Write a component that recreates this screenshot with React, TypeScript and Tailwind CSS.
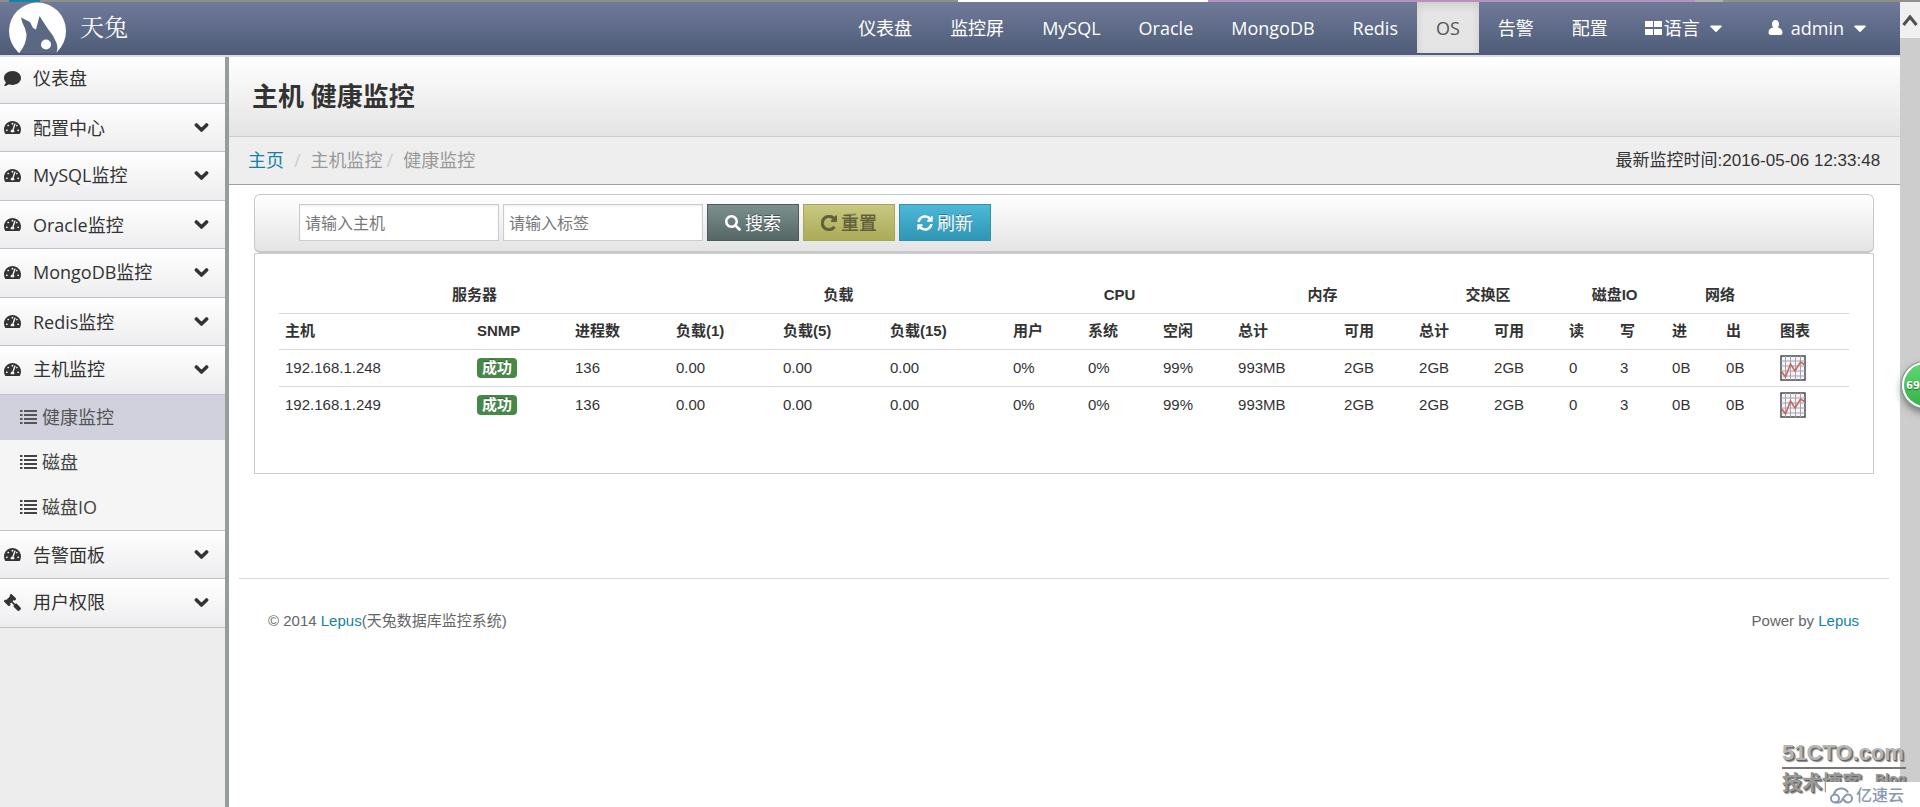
import React from "react";
import {
  FaCaretDown,
  FaChevronDown,
  FaComment,
  FaGavel,
  FaSearch,
  FaSyncAlt,
  FaTachometerAlt,
} from "react-icons/fa";

const NAV = ["仪表盘", "监控屏", "MySQL", "Oracle", "MongoDB", "Redis", "OS", "告警", "配置"];

type Entry = { label: string; icon: React.ReactNode; children?: string[] };

const gauge = <FaTachometerAlt size={17} />;

const MENU: Entry[] = [
  { label: "配置中心", icon: gauge },
  { label: "MySQL监控", icon: gauge },
  { label: "Oracle监控", icon: gauge },
  { label: "MongoDB监控", icon: gauge },
  { label: "Redis监控", icon: gauge },
  { label: "主机监控", icon: gauge, children: ["健康监控", "磁盘", "磁盘IO"] },
  { label: "告警面板", icon: gauge },
  { label: "用户权限", icon: <FaGavel size={17} className="-scale-x-100" /> },
];

const GROUPS: [string, number][] = [
  ["服务器", 3],
  ["负载", 3],
  ["CPU", 3],
  ["内存", 2],
  ["交换区", 2],
  ["磁盘IO", 2],
  ["网络", 2],
  ["", 1],
];

const COLUMNS = [
  "主机", "SNMP", "进程数", "负载(1)", "负载(5)", "负载(15)", "用户", "系统", "空闲",
  "总计", "可用", "总计", "可用", "读", "写", "进", "出", "图表",
];

const ROWS = ["192.168.1.248", "192.168.1.249"].map((host) => ({
  host,
  processes: "136",
  values: ["0.00", "0.00", "0.00", "0%", "0%", "99%", "993MB", "2GB", "2GB", "2GB", "0", "3", "0B", "0B"],
}));

function Logo() {
  return (
    <svg width="60" height="51" viewBox="8 2 60 51" aria-hidden="true">
      <circle cx="37.500" cy="31" r="28.500" fill="#fff" />
      <path
        d="M21 17.500 L30 22 L33 28 L36 29.500 L39.500 16 Q44 23 48 29 Q54 36 56.500 43 Q58.500 48 56 54 L18.500 54 Q27 44 26.500 34 Q25.500 28 22.500 23 Z"
        fill="#5a6884"
      />
      <circle cx="46" cy="44.500" r="5" fill="#fff" />
    </svg>
  );
}

function ListIcon() {
  return (
    <svg width="17" height="14" viewBox="0 0 17 14" aria-hidden="true" fill="currentColor">
      <path d="M0 0h2.500v2H0zM4 0h13v2H4zM0 4h2.500v2H0zM4 4h13v2H4zM0 8h2.500v2H0zM4 8h13v2H4zM0 12h2.500v2H0zM4 12h13v2H4z" />
    </svg>
  );
}

function RepeatIcon() {
  return (
    <svg width="16" height="16" viewBox="128 128 1536 1536" aria-hidden="true" fill="currentColor" stroke="currentColor" strokeWidth="50">
      <path d="M1664 256v448q0 26-19 45t-45 19h-448q-42 0-59-40-17-39 14-69l138-138Q1097 384 896 384q-104 0-198.500 40.500T534 534 424.500 697.500 384 896t40.500 198.500T534 1258t163.500 109.500T896 1408q119 0 225-52t179-147q7-10 23-12 15 0 25 9l137 138q9 8 9.500 20.500t-7.500 22.500q-109 132-264 204.500T896 1664q-156 0-298-61t-245-164-164-245-61-298 61-298 164-245 245-164 298-61q147 0 284.500 55.500T1425 328l130-129q29-31 70-14 39 17 39 59z" />
    </svg>
  );
}

function UserIcon() {
  return (
    <svg width="15" height="15" viewBox="0 0 15 15" aria-hidden="true" fill="currentColor">
      <path d="M7.500 0C9.800 0 11 1.700 11 4c0 1.500-.5 2.800-1.300 3.600C12.500 8 14.500 9.500 14.500 12.500c0 1.500-.8 2.500-2 2.500h-10c-1.200 0-2-1-2-2.500 0-3 2-4.500 4.800-4.900C4.500 6.800 4 5.500 4 4c0-2.300 1.200-4 3.500-4z" />
    </svg>
  );
}

function ChartIcon() {
  return (
    <svg width="26" height="26" viewBox="0 0 26 26" aria-hidden="true" className="block">
      <rect x="1" y="1" width="24" height="24" fill="#f6f4f6" stroke="#4a4a50" strokeWidth="1.500" />
      <path d="M5.500 1v24M10.500 1v24M15.500 1v24M20.500 1v24M1 6h24M1 11h24M1 16h24M1 21h24" stroke="#a4a4b0" strokeWidth="1" />
      <path d="M1.500 16.500L5.500 22 10.500 9 15 16 20.500 7 24.500 9.500" fill="none" stroke="#c2675c" strokeWidth="1.500" />
    </svg>
  );
}

function Header() {
  return (
    <header className="flex h-[55px] items-stretch justify-between border-b-2 border-[#dcdce8] bg-gradient-to-b from-[#6f7a98] to-[#4e5c78] text-white">
      <a href="#" className="flex items-start pl-2">
        <Logo />
        <span className="pt-1.5 pl-3 font-['Noto_Serif_CJK_SC','Noto_Sans_CJK_SC',serif] text-2xl leading-9">天兔</span>
      </a>
      <nav className="flex items-stretch pr-4 pb-0.5 text-lg">
        {NAV.map((item) => (
          <a
            key={item}
            href="#"
            className={
              item === "OS"
                ? "flex items-center bg-[#e5e5e5] px-[19px] text-[#555] shadow-[inset_0_3px_8px_rgba(0,0,0,0.12)]"
                : "flex items-center px-[19px]"
            }
          >
            {item}
          </a>
        ))}
        <button type="button" className="flex items-center pr-4 pl-[18px]">
          <svg width="17" height="14" viewBox="0 0 17 14" aria-hidden="true" fill="currentColor">
            <path d="M0 0h8v6H0zM9 0h8v6H9zM0 8h8v6H0zM9 8h8v6H9z" />
          </svg>
          <span className="pl-0.5">语言</span>
          <FaCaretDown size={20} className="ml-1.5" />
        </button>
        <button type="button" className="flex items-center pr-3.5 pl-[26px]">
          <UserIcon />
          <span className="pl-2">admin</span>
          <FaCaretDown size={20} className="ml-1.5" />
        </button>
      </nav>
    </header>
  );
}

function Sidebar() {
  const row =
    "flex w-full items-center border-b border-[#c3c3c5] bg-gradient-to-b from-white to-[#ededef] pr-4 pl-1 text-left";
  return (
    <aside className="w-[229px] shrink-0 border-r-4 border-[#999c9c] bg-[#ededed] text-lg">
      <ul>
        <li>
          <a href="#" className={`${row} h-[47px] pb-1`}>
            <FaComment size={17} />
            <span className="pl-3">仪表盘</span>
          </a>
        </li>
        {MENU.map((item) => (
          <li key={item.label} className="group">
            <button type="button" className={`${row} group-even:h-12 group-odd:h-[49px] group-odd:pb-0.5`}>
              {item.icon}
              <span className="flex-1 pl-3">{item.label}</span>
              <FaChevronDown size={15} stroke="currentColor" strokeWidth={40} />
            </button>
            {item.children && (
              <ul className="border-b border-[#c3c3c5] bg-[#f5f5f5]">
                {item.children.map((child, i) => (
                  <li key={child}>
                    <a
                      href="#"
                      className={
                        i === 0
                          ? "flex h-[45px] items-center bg-[#d1d1de] pb-0.5 pl-5 text-[#555]"
                          : "flex h-[45px] items-center pb-0.5 pl-5 text-[#444]"
                      }
                    >
                      <ListIcon />
                      <span className="pl-[5px]">{child}</span>
                    </a>
                  </li>
                ))}
              </ul>
            )}
          </li>
        ))}
      </ul>
    </aside>
  );
}

function Toolbar() {
  const input =
    "h-[37px] w-[200px] border border-[#ccc] bg-white px-[5px] text-base shadow-[inset_0_1px_2px_rgba(0,0,0,0.08)] placeholder:text-[#777] outline-none";
  const button = "flex h-[37px] items-center gap-1 border px-[17px] text-lg";
  return (
    <form
      onSubmit={(e) => e.preventDefault()}
      className="flex items-center gap-1 rounded-md border border-b-2 border-[#c8c8c8] bg-gradient-to-b from-white to-[#e4e4e4] pt-[9px] pb-2.5 pl-11"
    >
      <input className={input} aria-label="主机" placeholder="请输入主机" />
      <input className={input} aria-label="标签" placeholder="请输入标签" />
      <button type="submit" className={`${button} border-[#4c5c5b] bg-gradient-to-b from-[#7b908e] to-[#566866] text-white [text-shadow:0_-1px_0_rgba(0,0,0,0.4)]`}>
        <FaSearch size={16} />
        搜索
      </button>
      <button type="reset" className={`${button} border-[#a5a55c] bg-gradient-to-b from-[#c8c880] to-[#abab58] text-[#5e5e3c] [text-shadow:0_-1px_0_rgba(0,0,0,0.25)]`}>
        <RepeatIcon />
        重置
      </button>
      <button type="button" className={`${button} border-[#3391ae] bg-gradient-to-b from-[#4db8d9] to-[#2f96b4] text-white [text-shadow:0_-1px_0_rgba(0,0,0,0.3)]`}>
        <FaSyncAlt size={16} />
        刷新
      </button>
    </form>
  );
}

function HealthTable() {
  const cell = "px-1.5 font-normal";
  return (
    <table className="w-full table-fixed border-collapse text-left text-[15px] leading-5">
      <colgroup>
        <col className="w-[192px]" />
        <col className="w-[98px]" />
        <col className="w-[101px]" />
        <col className="w-[107px]" />
        <col className="w-[107px]" />
        <col className="w-[123px]" />
        <col className="w-[75px]" />
        <col className="w-[75px]" />
        <col className="w-[75px]" />
        <col className="w-[106px]" />
        <col className="w-[75px]" />
        <col className="w-[75px]" />
        <col className="w-[75px]" />
        <col className="w-[51px]" />
        <col className="w-[52px]" />
        <col className="w-[54px]" />
        <col className="w-[54px]" />
        <col className="w-[75px]" />
      </colgroup>
      <thead>
        <tr className="h-9">
          {GROUPS.map(([label, span]) => (
            <th key={label} colSpan={span} className="px-1.5 text-center font-bold">
              {label}
            </th>
          ))}
        </tr>
        <tr className="h-9 border-t border-[#d8d8d8]">
          {COLUMNS.map((label, i) => (
            <th key={i} className="px-1.5 font-bold whitespace-nowrap">
              {label}
            </th>
          ))}
        </tr>
      </thead>
      <tbody>
        {ROWS.map((row) => (
          <tr key={row.host} className="h-[37px] border-t border-[#d8d8d8]">
            <td className={cell}>{row.host}</td>
            <td className={cell}>
              <span className="inline-block rounded-sm bg-[#468847] px-[5px] text-[15px] leading-5 font-bold text-white [text-shadow:0_-1px_0_rgba(0,0,0,0.25)]">
                成功
              </span>
            </td>
            <td className={cell}>{row.processes}</td>
            {row.values.map((value, i) => (
              <td key={i} className={cell}>
                {value}
              </td>
            ))}
            <td className={cell}>
              <a href="#" aria-label="图表" className="block">
                <ChartIcon />
              </a>
            </td>
          </tr>
        ))}
      </tbody>
    </table>
  );
}

function Watermark() {
  const emboss = "[text-shadow:1px_1px_0_#666,2px_2px_1px_#888]";
  return (
    <div className="absolute right-0 bottom-0 h-[68px] w-[140px] overflow-hidden text-[#b5b5b5]">
      <div className={`mr-3.5 ml-0.5 border-b-2 border-[#777] font-['Liberation_Sans',sans-serif] text-[22px] leading-7 font-bold ${emboss}`}>
        51CTO.com
      </div>
      <div className={`mr-3.5 ml-0.5 flex justify-between text-[#999] ${emboss}`}>
        <span className="text-xl leading-7 font-bold">技术博客</span>
        <span className="font-['Liberation_Sans',sans-serif] text-sm leading-5 font-bold">Blog</span>
      </div>
      <div className="absolute right-0 bottom-0 flex h-[25px] w-[94px] items-center gap-0.5 bg-white pl-[3px] text-[#8a97b0]">
        <svg width="25" height="18" viewBox="0 0 25 18" fill="none" stroke="currentColor" strokeWidth="2" aria-hidden="true">
          <path d="M5 8.500A7.500 7.500 0 0 1 19 6.500" />
          <circle cx="6" cy="12.500" r="4" />
          <path d="M6 16.500h4c4 0 4-8 9-8a4 4 0 0 1 0 8c-3 0-4-2-5-4" />
        </svg>
        <span className="text-base leading-6 font-medium">亿速云</span>
      </div>
    </div>
  );
}

export default function App() {
  return (
    <div className="relative flex min-h-screen flex-col overflow-hidden bg-white font-['Open_Sans','Noto_Sans_CJK_SC',sans-serif] text-[#333]">
      <div className="flex h-[2px] bg-[#8d908d]">
        <div className="ml-[9px] w-[31px] bg-[#1683a8]" />
        <div className="ml-[918px] w-[250px] bg-white" />
        <div className="w-[487px] bg-[#b593bd]" />
        <div className="w-7 bg-[#b0b0b0]" />
      </div>
      <div className="flex flex-1">
        <div className="flex flex-1 flex-col">
          <Header />
          <div className="flex flex-1">
            <Sidebar />
            <main className="min-w-0 flex-1">
              <h1 className="flex h-20 items-center border-b border-[#ccc] bg-gradient-to-b from-white to-[#e4e4e4] pl-[23px] text-[26px] font-bold">
                主机 健康监控
              </h1>
              <div className="flex h-12 items-center justify-between border-b border-[#a0a0a0] bg-[#eee] pr-5 pl-[19px]">
                <ol className="flex pb-0.5 text-lg text-[#999]">
                  <li>
                    <a href="#" className="text-[#1382a4]">主页</a>
                    <span className="px-2.5 text-[#ccc]">/</span>
                  </li>
                  <li>
                    主机监控<span className="pr-2.5 pl-1 text-[#ccc]">/</span>
                  </li>
                  <li>健康监控</li>
                </ol>
                <p className="font-['Liberation_Sans','Noto_Sans_CJK_SC',sans-serif] text-[17px]">
                  最新监控时间:2016-05-06 12:33:48
                </p>
              </div>
              <div className="pt-[9px] pr-[26px] pl-[25px]">
                <Toolbar />
                <section className="border border-[#ccc] px-6 pt-[23px] pb-[50px] font-['Liberation_Sans','Noto_Sans_CJK_SC',sans-serif]">
                  <HealthTable />
                </section>
              </div>
              <footer className="mt-[104px] mr-[11px] ml-2.5 flex items-center justify-between border-t border-[#d8d8d8] pt-8 pr-[30px] pl-[29px] font-['Liberation_Sans','Noto_Sans_CJK_SC',sans-serif] text-[15px] leading-5 text-[#666]">
                <p>
                  © 2014 <a href="#" className="text-[#1382a4]">Lepus</a>(天兔数据库监控系统)
                </p>
                <p>
                  Power by <a href="#" className="text-[#1382a4]">Lepus</a>
                </p>
              </footer>
            </main>
          </div>
        </div>
        <div className="flex w-5 shrink-0 flex-col bg-[#cdcdcd]">
          <div className="flex h-9 items-center justify-center bg-[#f0f0f0]">
            <svg width="16" height="14" viewBox="0 0 16 14" aria-hidden="true">
              <path d="M1.500 12L8 4l6.500 8" fill="none" stroke="#505050" strokeWidth="3" />
            </svg>
          </div>
        </div>
      </div>
      <div className="absolute top-[362px] -right-7 flex size-[46px] items-center rounded-full border-2 border-white bg-gradient-to-b from-[#5fd672] to-[#35b34a] pl-0.5 font-['DejaVu_Sans',sans-serif] text-[10px] font-bold text-white shadow-[0_0_0_1px_#7a9a80,0_4px_8px_rgba(0,0,0,0.5)] [text-shadow:0_1px_1px_rgba(0,0,0,0.5)]">
        69
      </div>
      <Watermark />
    </div>
  );
}
